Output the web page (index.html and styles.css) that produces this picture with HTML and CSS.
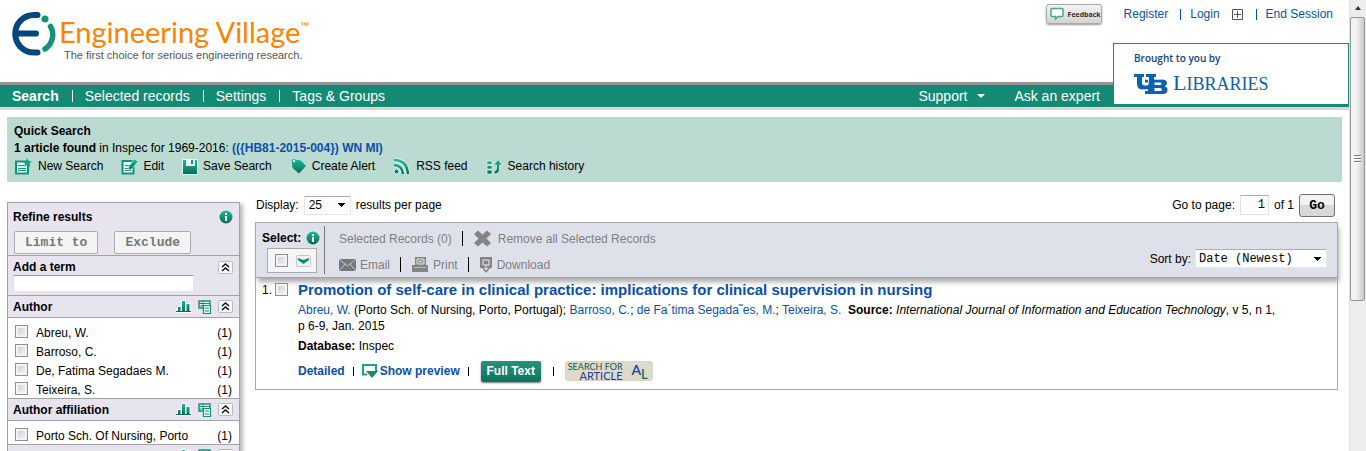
FILE: index.html
```html
<!DOCTYPE html>
<html lang="en">
<head>
  <meta charset="UTF-8">
  <title>Engineering Village - Quick Search Results</title>
  <link rel="stylesheet" href="styles.css">
</head>
<body>
  <!-- shared icons -->
  <svg class="defs" width="0" height="0" aria-hidden="true">
    <defs>
      <linearGradient id="green" x1="0" y1="0" x2="0" y2="1">
        <stop offset="0" stop-color="#1dbb98"/>
        <stop offset="1" stop-color="#0a6a57"/>
      </linearGradient>
    </defs>
    <symbol id="info" viewBox="0 0 14 14">
      <circle cx="7" cy="7" r="6.5" fill="url(#green)"/>
      <path d="M6 3h2v2H6zM6 6h2v5H6z" fill="#fff"/>
    </symbol>
    <symbol id="chart" viewBox="0 0 16 13">
      <path d="M0 11h15v1H0zM2 7h2.500v4H2zM6 1h3v10H6zM10.500 4h3v7h-3z" fill="url(#green)" stroke="#fff" stroke-width="2" paint-order="stroke"/>
    </symbol>
    <symbol id="export" viewBox="0 0 14 14">
      <path d="M1 1h11v7H1z" fill="#e9fff9" stroke="#168f76" stroke-width="1.400"/>
      <path d="M1 3.500h11M1 6h6M5 1v6" stroke="#168f76"/>
      <path d="M5.500 5.500h7v8h-7z" fill="#e9fff9" stroke="#168f76" stroke-width="1.200"/>
      <path d="M7 8h4M7 11h4" stroke="#168f76"/>
    </symbol>
    <symbol id="up" viewBox="0 0 15 13">
      <rect x=".5" y=".5" width="14" height="12" rx="1" fill="#f7f7f7" stroke="#bbb"/>
      <path d="M4 6l3.500-3L11 6M4 10l3.500-3 3.500 3" fill="none" stroke="#111" stroke-width="1.500"/>
    </symbol>
  </svg>

  <div class="page">
    <header class="header">
      <div class="brand">
        <svg class="logo" width="45" height="46" viewBox="0 0 45 46">
          <path d="M25.500 4H22a18.500 18.500 0 0 0 0 37.500h3.500M5 22.500h19" fill="none" stroke="#04467e" stroke-width="6" stroke-linecap="round"/>
          <circle cx="33" cy="8" r="3.500" fill="#16927a"/>
          <path d="M38.500 15.500C42.500 22 41.500 32 33 38" fill="none" stroke="#16927a" stroke-width="5.500" stroke-linecap="round"/>
        </svg>
        <div>
          <div class="name">Engineering Village<sup>™</sup></div>
          <div class="slogan">The first choice for serious engineering research.</div>
        </div>
      </div>
      <div class="account">
        <button class="feedback">
          <svg width="14" height="14" viewBox="0 0 14 14"><path d="M2 1.500h10q1 0 1 1v6q0 1-1 1H8L5.500 12V9.500H2q-1 0-1-1v-6q0-1 1-1z" fill="#fff" stroke="#45a893" stroke-width="1.500"/></svg>
          Feedback
        </button>
        <a class="register" href="#">Register</a>
        <a class="login" href="#">Login</a>
        <svg width="11" height="11" viewBox="0 0 11 11"><path d="M.5.500h10v10H.500zM5.500 2v7M2 5.500h7" fill="none" stroke="#555"/></svg>
        <a class="end" href="#">End Session</a>
      </div>
      <div class="library">
        <div class="brought">Brought to you by</div>
        <div class="ub">
          <svg width="34" height="20" viewBox="0 0 34 20">
            <path d="M0 0h10v3H8v6q0 2.500 3 2.500h1.500q2.500 0 2.500-2.500V3h-3V0h10v3h-2v7q0 5.500-6 5.500H9Q3 15.500 3 10V3H0z" fill="#0b62ae"/>
            <path d="M11 17h3V8.500h-3V5.500h17q5 0 5 3.500 0 2.500-2.500 3.300 3 .7 3 3.700 0 4-5 4H11zM20.500 8.500v2.500H26q1.500 0 1.500-1.200T26 8.500zM20.500 14v3H26q2 0 2-1.500T26 14z" fill="#0b62ae" fill-rule="evenodd"/>
            <path d="M10.500 5h4M20.500 5H28M14.500 5v5.500M9 16h5" stroke="#fff" stroke-width=".8" fill="none"/>
          </svg>
          <span class="libname">L<small>IBRARIES</small></span>
        </div>
      </div>
    </header>

    <nav class="nav">
      <a class="on" href="#">Search</a>
      <a href="#">Selected records</a>
      <a href="#">Settings</a>
      <a href="#">Tags &amp; Groups</a>
      <a class="support" href="#">Support <i class="arrow"></i></a>
      <a class="expert" href="#">Ask an expert</a>
    </nav>

    <section class="query">
      <b>Quick Search</b>
      <div><b>1 article found</b> in Inspec for 1969-2016: <a href="#"><b>(({HB81-2015-004}) WN MI)</b></a></div>
      <div class="actions">
        <a href="#"><svg width="19" height="17" viewBox="0 0 19 17"><path d="M2 3.500h12v12H2z" fill="#e8fff9" stroke="#15937a" stroke-width="2"/><path d="M4 7.500h6M4 10.500h8M4 12.500h8" stroke="#15937a"/><path d="M13 0l1.500 3 3.500.5-2.500 2 1 3.500-3.500-2-3 2 1-3.500-2.500-2 3.500-.5z" fill="#16a084"/></svg>New Search</a>
        <a href="#"><svg width="17" height="17" viewBox="0 0 17 17"><path d="M1.500 3h11v12.500h-11z" fill="#e8fff9" stroke="#15937a" stroke-width="2"/><path d="M4 7.500h5M4 10.500h4M4 12.500h6" stroke="#15937a"/><path d="M7 12l1-4 5.500-7L17 3.500 11 11z" fill="url(#green)" stroke="#d9fff6" stroke-width=".6"/></svg>Edit</a>
        <a href="#"><svg width="16" height="16" viewBox="0 0 16 16"><path d="M.5.500h15v15H.500z" fill="url(#green)" stroke="#e2f5f0"/><path d="M4 1h9v6H4z" fill="#e5fff8"/><path d="M9 1h2v4H9z" fill="#16927a"/></svg>Save Search</a>
        <a href="#"><svg width="17" height="17" viewBox="0 0 17 17"><path d="M1 2l2-1.500 8 1.500 5.500 6L9 16 2 10z" fill="url(#green)" stroke="#d9f3ed" stroke-width=".7"/><circle cx="4" cy="3" r="1.200" fill="#e5fff8"/></svg>Create Alert</a>
        <a href="#"><svg width="18" height="17" viewBox="0 0 18 17"><g fill="none" stroke="#e5f7f3" stroke-width="4"><path d="M1 2q13 0 14 14M1 7q8 0 9 9"/></g><g fill="none" stroke="url(#green)" stroke-width="2.500"><path d="M1 2q13 0 14 14M1 7q8 0 9 9"/></g><circle cx="3.500" cy="13.500" r="2.500" fill="#0e8068" stroke="#e5f7f3"/></svg>RSS feed</a>
        <a href="#"><svg width="17" height="16" viewBox="0 0 17 16"><path d="M1 2h5v3.500H1zM1 6.500h5V10H1zM1 11h5v4H1zM8 12q2.500 0 2.500-3V6H7.500l4.500-5.500L16.500 6H13.500v4q0 5-5.500 5z" fill="url(#green)" stroke="#e5f7f3" stroke-width=".7"/></svg>Search history</a>
      </div>
    </section>

    <div class="columns">
      <aside class="refine">
        <div class="refine-top">
          <div class="row"><b>Refine results</b><svg width="14" height="14"><use href="#info"/></svg></div>
          <div class="refine-buttons">
            <button class="limit">Limit to</button>
            <button class="limit">Exclude</button>
          </div>
        </div>
        <div class="term">
          <div class="row"><label for="term">Add a term</label><svg width="15" height="13"><use href="#up"/></svg></div>
          <input type="text" id="term">
        </div>
        <div class="facet row"><b>Author</b>
          <svg width="16" height="13"><use href="#chart"/></svg>
          <svg width="14" height="14"><use href="#export"/></svg>
          <svg width="15" height="13"><use href="#up"/></svg>
        </div>
        <ul class="values">
          <li><input type="checkbox" id="a1"><label for="a1">Abreu, W.</label><span>(1)</span></li>
          <li><input type="checkbox" id="a2"><label for="a2">Barroso, C.</label><span>(1)</span></li>
          <li><input type="checkbox" id="a3"><label for="a3">De, Fatima Segadaes M.</label><span>(1)</span></li>
          <li><input type="checkbox" id="a4"><label for="a4">Teixeira, S.</label><span>(1)</span></li>
        </ul>
        <div class="facet row"><b>Author affiliation</b>
          <svg width="16" height="13"><use href="#chart"/></svg>
          <svg width="14" height="14"><use href="#export"/></svg>
          <svg width="15" height="13"><use href="#up"/></svg>
        </div>
        <ul class="values">
          <li><input type="checkbox" id="f1"><label for="f1">Porto Sch. Of Nursing, Porto</label><span>(1)</span></li>
        </ul>
        <div class="facet row"><b></b>
          <svg width="16" height="13"><use href="#chart"/></svg>
          <svg width="14" height="14"><use href="#export"/></svg>
          <svg width="15" height="13"><use href="#up"/></svg>
        </div>
      </aside>

      <main class="results">
        <div class="paging">
          <label for="perpage">Display:</label>
          <select id="perpage"><option>25</option><option>50</option><option>100</option></select>
          <span>results per page</span>
          <label class="goto" for="pageno">Go to page:</label>
          <input type="text" id="pageno" value="1">
          <span>of 1</span>
          <button class="go">Go</button>
        </div>

        <div class="list">
          <div class="toolbar">
            <div class="select">
              <div class="select-title"><b>Select:</b><svg width="14" height="14"><use href="#info"/></svg></div>
              <div class="select-box">
                <input type="checkbox" aria-label="Select page">
                <svg width="15" height="12" viewBox="0 0 15 12"><rect x=".5" y=".5" width="14" height="11" rx="1" fill="#eef3f2" stroke="#c4c8c8"/><path d="M2 3l5.500 2L13 3v2L7.500 9 2 5z" fill="#0d8a70"/></svg>
              </div>
            </div>
            <div class="tools">
              <div class="tool-row">
                <a href="#">Selected Records (0)</a>
                <i class="bar"></i>
                <a href="#"><svg width="19" height="17" viewBox="0 0 19 17"><path d="M1 4l4-3.500 4.500 4 4.500-4L18 4l-4.500 4.500L18 13l-4 3.500-4.500-4-4.500 4L1 13l4.500-4.500z" fill="#858585"/></svg>Remove all Selected Records</a>
              </div>
              <div class="tool-row second">
                <a href="#"><svg width="17" height="13" viewBox="0 0 17 13"><path d="M0 1h17v12H0z" fill="#777"/><path d="M0 1l8.500 7L17 1M0 13l6-7M17 13l-6-7" stroke="#c9cace" fill="none"/></svg>Email</a>
                <i class="bar"></i>
                <a href="#"><svg width="18" height="17" viewBox="0 0 18 17"><path d="M4 1h11v8h2v7H1V9h3z" fill="#858585"/><path d="M6 3h7v5H6z" fill="#999" stroke="#e0e2e9"/><path d="M8 5.500h3" stroke="#e0e2e9"/><path d="M3 11.500h12" stroke="#bbb"/></svg>Print</a>
                <i class="bar"></i>
                <a href="#"><svg width="14" height="18" viewBox="0 0 14 18"><path d="M1 1h12v11h-2l-4 5-4-5H1z" fill="#858585"/><path d="M4 4h6v5H4zM7 9v5M5 12l2 2 2-2" fill="none" stroke="#eee"/></svg>Download</a>
              </div>
            </div>
            <div class="sort">
              <label for="sort">Sort by:</label>
              <select id="sort"><option>Date (Newest)</option><option>Relevance</option></select>
            </div>
          </div>

          <article class="record">
            <span class="num">1.</span>
            <input type="checkbox" aria-label="Select record 1">
            <div class="detail">
              <h3><a href="#">Promotion of self-care in clinical practice: implications for clinical supervision in nursing</a></h3>
              <p><a href="#">Abreu, W.</a> (Porto Sch. of Nursing, Porto, Portugal); <a href="#">Barroso, C.</a>; <a href="#">de Fa´tima Segada˜es, M.</a>; <a href="#">Teixeira, S.</a>&nbsp; <b>Source:</b> <i>International Journal of Information and Education Technology</i>, v 5, n 1, p 6-9, Jan. 2015</p>
              <p class="db"><b>Database:</b> Inspec</p>
              <div class="links">
                <a href="#"><b>Detailed</b></a>
                <i class="tick"></i>
                <a class="preview" href="#"><svg width="16" height="14" viewBox="0 0 16 14"><path d="M5 10.500H1V1h13v6" fill="none" stroke="#1f9f86" stroke-width="2"/><path d="M4 7h12l-6 7z" fill="#168a72"/></svg><b>Show preview</b></a>
                <i class="tick"></i>
                <button class="fulltext">Full Text</button>
                <i class="tick"></i>
                <button class="sfx">
                  <span class="sfx-text">SEARCH FOR<br><em>ARTICLE</em></span>
                  <span class="al">A<sub>L</sub></span>
                </button>
              </div>
            </div>
          </article>
        </div>
      </main>
    </div>
  </div>

  <div class="scroll" aria-hidden="true">
    <svg width="17" height="17" viewBox="0 0 17 17"><path d="M5 10l3-4 3 4z" fill="#333"/></svg>
    <div class="thumb"><i></i><i></i><i></i></div>
  </div>
</body>
</html>
```
FILE: styles.css
```css
* { box-sizing: border-box; }
body {
  margin: 0;
  display: flex;
  height: 100vh;
  overflow: hidden;
  background: #fff;
  color: #000;
  font: 12px/16px "Liberation Sans", Arial, sans-serif;
}
a { color: #0a50a8; text-decoration: none; }
svg { flex: none; }
input, select, button { margin: 0; font: inherit; color: inherit; }
.defs { position: absolute; }
.page { flex: 1; min-width: 0; }

/* header */
.header {
  position: relative;
  display: flex;
  justify-content: space-between;
  align-items: flex-start;
  height: 82px;
}
.brand { display: flex; padding: 11px 0 0 12px; }
.name {
  margin: 5px 0 0 2px;
  color: #ff8200;
  font: 29px/32px Lato, sans-serif;
}
.name sup { font-size: 12px; line-height: 12px; vertical-align: 12px; }
.slogan { margin-left: 7px; font-size: 11px; line-height: 14px; color: #555; }
.account { display: flex; align-items: center; padding: 4px 16px 0 0; }
.feedback {
  display: flex;
  align-items: center;
  gap: 4px;
  width: 56px;
  height: 20px;
  padding: 0 3px;
  border: 1px solid #aaa;
  border-radius: 3px;
  background: linear-gradient(#f4f4f4, #d3d3d3);
  box-shadow: 0 1px 2px #999;
  color: #333;
  font: bold 7px "Open Sans", sans-serif;
}
.register { margin-left: 22px; }
.login, .end { padding-left: 10px; background: linear-gradient(#0a50a8, #0a50a8) 0 3px / 1px 11px no-repeat; }
.login { margin: 0 12px; }
.end { margin-left: 13px; }
.library {
  position: absolute;
  top: 43px;
  right: 0;
  z-index: 1;
  width: 236px;
  height: 62px;
  padding: 7px 20px;
  border: 1px solid #138a73;
  background: #fff;
}
.brought { color: #12437a; font: 600 10px/14px "Open Sans", sans-serif; }
.ub { display: flex; align-items: center; gap: 5px; padding-top: 7px; }
.libname { color: #0b62ae; font: 22px/22px "Liberation Serif", serif; }
.libname small { font-size: 18px; }

.nav {
  display: flex;
  align-items: center;
  height: 28px;
  padding-left: 12px;
  border-top: 3px solid #989495;
  border-bottom: 3px solid #d5d5d5;
  background: #138a73;
  font-size: 14px;
}
.nav a { color: #fff; }
.nav a + a { margin-left: 13px; padding-left: 13px; background: linear-gradient(#fff, #fff) 0 2px / 1px 12px no-repeat; }
.nav .on { font-weight: bold; }
.nav a.support { margin-left: auto; background: none; }
.nav a.expert { margin: 0 249px 0 16px; background: none; }
.arrow {
  display: inline-block;
  margin: 0 0 3px 6px;
  border: 4px solid transparent;
  border-top-color: #fff;
  border-bottom: 0;
}

.query {
  margin: 7px 7px 0;
  height: 65px;
  padding: 6px 7px 0;
  background: #bbdad1;
  line-height: 17px;
}
.actions { display: flex; align-items: center; gap: 18px; padding-top: 1px; }
.actions a { display: flex; align-items: center; gap: 5px; color: #000; }

.columns { display: flex; align-items: flex-start; gap: 15px; padding: 12px 11px 0 7px; }

/* left column */
.refine {
  flex: none;
  width: 233px;
  margin-top: 8px;
  border: 1px solid #a3a1a8;
  box-shadow: 3px 2px 4px #bbb;
  background: #e7e3ef;
}
.row { display: flex; align-items: center; gap: 6px; }
.row b, .row label { flex: 1; font-weight: bold; }
.refine-top { height: 53px; padding: 6px 6px 0 5px; border-bottom: 1px solid #a3a1a8; }
.refine-buttons { display: flex; gap: 16px; padding: 6px 1px 0; }
.limit {
  height: 23px;
  padding: 0 10px;
  border: 1px solid #aaadad;
  border-radius: 2px;
  background: #f4f4f4;
  color: #777;
  font: bold 13px "Liberation Mono", monospace;
}
.term { height: 40px; padding: 3px 6px 0 5px; border-bottom: 1px solid #a3a1a8; }
.term input {
  display: block;
  width: 181px;
  height: 17px;
  padding: 0 3px;
  border: 1px solid #e3e3e8;
  border-top-color: #999;
}
.facet { height: 22px; padding: 0 6px 0 5px; border-bottom: 1px solid #a3a1a8; }
.values {
  margin: 0;
  padding: 4px 7px 0;
  border-bottom: 1px solid #a3a1a8;
  background: #fff;
  list-style: none;
}
.values li { display: flex; align-items: center; height: 19px; }
.values label { flex: 1; padding: 2px 0 0 8px; }
.values span { padding-top: 2px; }
input[type="checkbox"] {
  appearance: none;
  flex: none;
  width: 13px;
  height: 13px;
  border: 1px solid #8e8f8f;
  background: linear-gradient(135deg, #c4c9cf, #fafafa);
  box-shadow: inset 0 0 0 2px #f4f4f4;
}

/* right column */
.results { flex: 1; min-width: 0; }
.paging { display: flex; align-items: center; gap: 5px; height: 22px; padding: 0 3px 0 1px; }
/* the two gradients are the halves of the drop-down arrow */
select {
  appearance: none;
  border: 1px solid #e3e9ef;
  border-top-color: #abadb3;
  background-color: #fff;
  background-image: linear-gradient(to bottom left, #000 50%, transparent 50%), linear-gradient(to bottom right, #000 50%, transparent 50%);
  background-position: right 8px center, right 4px center;
  background-size: 4px 4px;
  background-repeat: no-repeat;
}
#perpage { width: 47px; height: 19px; padding: 0 4px; }
.goto { margin-left: auto; }
#pageno {
  width: 29px;
  height: 20px;
  padding: 0 3px;
  border: 1px solid #dde3ea;
  border-top-color: #abadb3;
  font: 12px "Liberation Mono", monospace;
  text-align: right;
}
.go {
  width: 36px;
  height: 23px;
  padding: 0;
  border: 1px solid #707070;
  border-radius: 3px;
  background: linear-gradient(#f2f2f2 50%, #d8d8d8 50%);
  font: bold 13px "Liberation Mono", monospace;
}
.list { margin-top: 6px; border: 1px solid #a8a8aa; }
.toolbar {
  display: flex;
  height: 55px;
  padding: 3px 10px 3px 6px;
  border-bottom: 1px solid #a3a3a8;
  background: #dfe1ea;
  box-shadow: 2px 4px 5px #aaa;
}
.select { width: 63px; border-right: 1px solid #777; }
.select-title { display: flex; align-items: center; justify-content: space-between; height: 22px; padding: 2px 4px 0 0; }
.select-box {
  display: flex;
  align-items: center;
  gap: 8px;
  width: 50px;
  height: 25px;
  margin-left: 5px;
  padding-left: 7px;
  border: 1px solid #aaa;
  background: #f5f5f7;
}
.tools { padding: 2px 0 0 14px; }
.tool-row { display: flex; align-items: center; gap: 10px; height: 21px; }
.tool-row a { display: flex; align-items: center; gap: 6px; color: #808080; }
.second { margin-top: 5px; }
.second a { gap: 4px; }
.bar { width: 1px; height: 15px; background: #000; }
.sort { display: flex; align-items: center; gap: 4px; margin: 23px 0 0 auto; height: 19px; }
#sort { width: 132px; height: 19px; padding: 0 3px; font: 12px "Liberation Mono", monospace; }

.record { display: flex; align-items: flex-start; padding: 4px 54px 5px 6px; }
.num { width: 13px; }
.record > input { margin-top: 1px; }
.detail { flex: 1; min-width: 0; padding-left: 10px; }
h3 { margin: 0 0 4px; font-size: 15px; line-height: 16px; }
p { margin: 0; }
.db { padding: 4px 0; }
.links { display: flex; align-items: center; height: 26px; }
.tick { width: 1px; height: 9px; margin: 0 8px; background: #000; }
.preview { display: flex; align-items: center; gap: 2px; }
.fulltext {
  width: 60px;
  height: 21px;
  margin: 0 4px;
  padding: 0;
  border: 0;
  border-radius: 2px;
  background: linear-gradient(#26947d, #08745e);
  box-shadow: 0 1px 2px #777;
  color: #fff;
  font-weight: bold;
}
.sfx {
  display: flex;
  align-items: center;
  justify-content: space-between;
  width: 88px;
  height: 20px;
  margin-left: 3px;
  padding: 0 4px 0 2px;
  border: 1px solid #d5d4c6;
  border-radius: 3px;
  background: #dbdacb;
  color: #1d5549;
}
.sfx-text { font: 9px/9px Lato, sans-serif; text-align: right; }
.sfx em { color: #1f3f99; font-size: 11px; font-style: normal; }
.al { color: #1f3f99; font: 600 14px/14px Lato, sans-serif; }
.al sub { color: #167050; font-size: 13px; line-height: 10px; }

/* scrollbar column */
.scroll { display: flex; flex-direction: column; width: 17px; background: #ededee; border-left: 1px solid #e2e2e2; }
.thumb {
  display: flex;
  flex-direction: column;
  justify-content: center;
  align-items: center;
  gap: 1px;
  width: 15px;
  height: 63%;
  border: 1px solid #979797;
  border-radius: 2px;
  background: linear-gradient(to right, #f3f3f3 40%, #c9c9cc);
}
.thumb i { width: 7px; height: 2px; background: #777; border-bottom: 1px solid #fff; }
```
